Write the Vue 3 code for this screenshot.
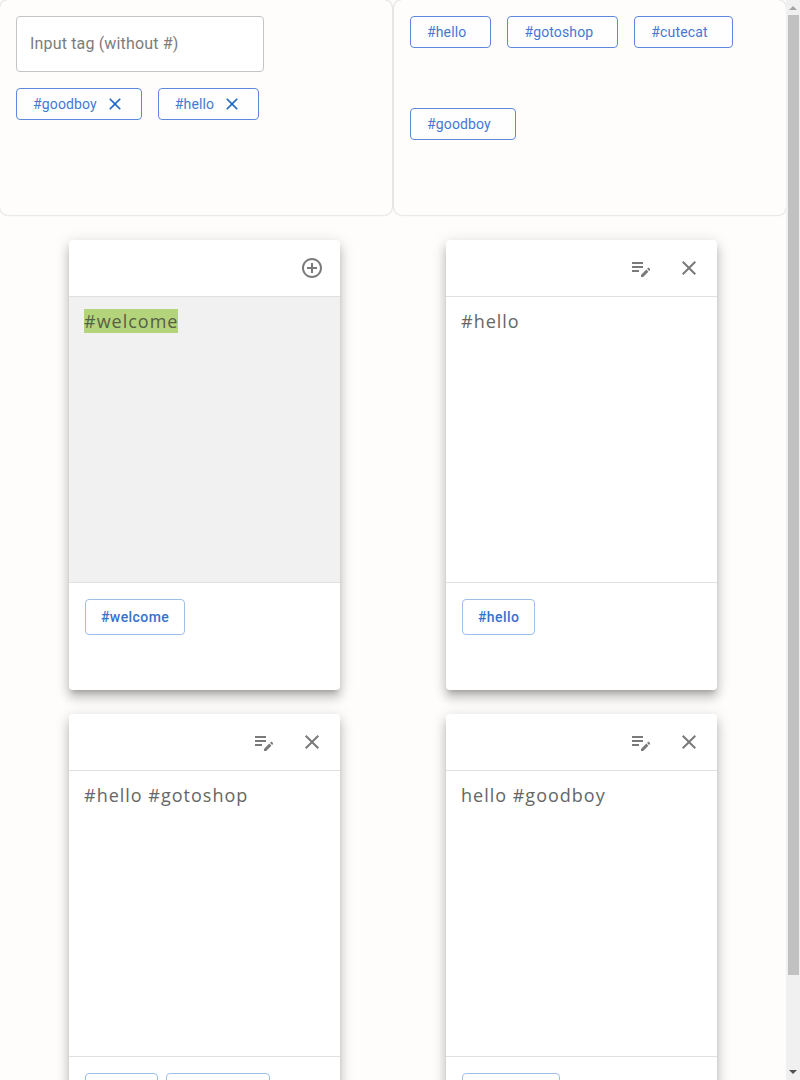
<script setup>
import { ref } from 'vue'

const draft = ref('')
const selected = ref(['goodboy', 'hello'])
const available = ['hello', 'gotoshop', 'cutecat', 'goodboy']

const notes = [
  { parts: [{ text: '#welcome', marked: true }], tags: ['welcome'], isNew: true },
  { parts: [{ text: '#hello' }], tags: ['hello'] },
  { parts: [{ text: '#hello #gotoshop' }], tags: ['hello', 'gotoshop'] },
  { parts: [{ text: 'hello #goodboy' }], tags: ['goodboy'] },
]

function addTag() {
  const tag = draft.value.trim()
  if (tag && !selected.value.includes(tag)) selected.value.push(tag)
  draft.value = ''
}

function removeTag(tag) {
  selected.value = selected.value.filter((t) => t !== tag)
}
</script>

<template>
  <div class="page">
    <main class="content">
      <div class="filters">
        <section class="panel">
          <input
            v-model="draft"
            class="tag-input"
            type="text"
            placeholder="Input tag (without #)"
            aria-label="Input tag (without #)"
            @keyup.enter="addTag"
          />
          <div class="chips">
            <span v-for="tag in selected" :key="tag" class="chip chip-closable">
              #{{ tag }}
              <button type="button" class="chip-close" :aria-label="`Remove ${tag}`" @click="removeTag(tag)">
                <svg viewBox="0 0 24 24" width="20" height="20"><path d="M19 6.41 17.59 5 12 10.59 6.41 5 5 6.41 10.59 12 5 17.59 6.41 19 12 13.41 17.59 19 19 17.59 13.41 12z" /></svg>
              </button>
            </span>
          </div>
        </section>
        <section class="panel available">
          <button v-for="tag in available" :key="tag" type="button" class="chip">#{{ tag }}</button>
        </section>
      </div>

      <div class="notes">
        <article v-for="(note, i) in notes" :key="i" class="note">
          <header class="note-head">
            <button v-if="note.isNew" type="button" class="icon-btn" aria-label="Add note">
              <svg viewBox="0 0 24 24" width="24" height="24"><path d="M13 7h-2v4H7v2h4v4h2v-4h4v-2h-4V7zm-1-5C6.48 2 2 6.48 2 12s4.48 10 10 10 10-4.48 10-10S17.52 2 12 2zm0 18c-4.41 0-8-3.59-8-8s3.59-8 8-8 8 3.59 8 8-3.59 8-8 8z" /></svg>
            </button>
            <template v-else>
              <button type="button" class="icon-btn" aria-label="Edit note">
                <svg viewBox="0 0 24 24" width="24" height="24"><path d="M3 10h11v2H3v-2zm0-2h11V6H3v2zm0 8h7v-2H3v2zm15.01-3.13.71-.71c.39-.39 1.02-.39 1.41 0l.71.71c.39.39.39 1.02 0 1.41l-.71.71-2.12-2.12zm-.71.71-5.3 5.3V21h2.12l5.3-5.3-2.12-2.12z" /></svg>
              </button>
              <button type="button" class="icon-btn" aria-label="Delete note">
                <svg viewBox="0 0 24 24" width="24" height="24"><path d="M19 6.41 17.59 5 12 10.59 6.41 5 5 6.41 10.59 12 5 17.59 6.41 19 12 13.41 17.59 19 19 17.59 13.41 12z" /></svg>
              </button>
            </template>
          </header>
          <div class="note-body" :class="{ 'note-body-new': note.isNew }">
            <component :is="part.marked ? 'mark' : 'span'" v-for="part in note.parts" :key="part.text">{{ part.text }}</component>
          </div>
          <footer class="note-foot">
            <button v-for="tag in note.tags" :key="tag" type="button" class="tag-btn">#{{ tag }}</button>
          </footer>
        </article>
      </div>
    </main>

    <div class="scrollbar" aria-hidden="true">
      <svg class="arrow arrow-up" viewBox="0 0 8 4" width="8" height="4"><path d="M0 4 4 0l4 4z" /></svg>
      <div class="track"><div class="thumb"></div></div>
      <svg class="arrow" viewBox="0 0 8 4" width="8" height="4"><path d="M0 0h8L4 4z" /></svg>
    </div>
  </div>
</template>

<style>
body {
  margin: 0;
  background: #fefdfc;
}
</style>

<style scoped>
.page,
.page * {
  box-sizing: border-box;
}
.page {
  display: flex;
  height: 100vh;
  overflow: hidden;
  font-family: Roboto, "Liberation Sans", sans-serif;
}
.content {
  flex: 1;
  min-width: 0;
  overflow: hidden;
}
.filters {
  display: grid;
  grid-template-columns: 1fr 1fr;
  gap: 2px;
}
.panel {
  min-height: 215px;
  padding: 16px;
  border-radius: 8px;
  background: #fefdfc;
  box-shadow: 0 0 2px rgba(0, 0, 0, 0.3);
}
.available {
  display: flex;
  flex-wrap: wrap;
  align-items: flex-start;
  column-gap: 16px;
}
.tag-input {
  display: block;
  width: 248px;
  max-width: 100%;
  height: 56px;
  padding: 0 13px 2px;
  border: 1px solid #c4c4c4;
  border-radius: 4px;
  background: #fff;
  color: #333;
  font: 16px Roboto, "Liberation Sans", sans-serif;
  letter-spacing: 0.01em;
}
.tag-input::placeholder {
  color: #7c7c7c;
  opacity: 1;
}
.chips {
  display: flex;
  flex-wrap: wrap;
  gap: 16px;
  margin-top: 16px;
}
.chip {
  display: inline-flex;
  align-items: center;
  height: 32px;
  padding: 0 24px 0 16px;
  border: 1px solid #5f88dc;
  border-radius: 4px;
  background: #fefefe;
  color: #4379d3;
  font: 14px Roboto, "Liberation Sans", sans-serif;
  letter-spacing: 0.01em;
}
.chip-closable {
  gap: 8px;
  padding-right: 16px;
}
.chip-close,
.icon-btn {
  display: flex;
  padding: 0;
  border: 0;
  background: none;
}
.chip-close svg {
  fill: #1f6ac4;
}
.notes {
  display: grid;
  grid-template-columns: 1fr 1fr;
  row-gap: 24px;
  justify-items: center;
  padding: 25px 16px 24px;
}
.note {
  display: flex;
  flex-direction: column;
  width: 100%;
  max-width: 271px;
  min-height: 450px;
  border-radius: 4px;
  background: #fff;
  box-shadow: 0 5px 5px -3px rgba(0, 0, 0, 0.2), 0 8px 10px 1px rgba(0, 0, 0, 0.14), 0 3px 14px 2px rgba(0, 0, 0, 0.12);
}
.note-head {
  display: flex;
  align-items: center;
  justify-content: flex-end;
  gap: 24px;
  height: 56px;
  padding: 0 16px;
}
.icon-btn svg {
  fill: #7a7a7a;
}
.note-body {
  flex: 1;
  padding: 12px 15px;
  border-top: 1px solid #e0e0e0;
  border-bottom: 1px solid #e0e0e0;
  color: #666;
  font: 18px/25px "Open Sans", sans-serif;
  letter-spacing: 1px;
}
.note-body-new {
  background: #f1f1f1;
}
.note-body mark {
  background: #b4d47c;
  color: #556045;
}
.note-foot {
  display: flex;
  flex-wrap: wrap;
  align-content: flex-start;
  gap: 8px;
  height: 107px;
  padding: 16px;
}
.tag-btn {
  height: 36px;
  padding: 0 15px;
  border: 1px solid #9dc0e8;
  border-radius: 4px;
  background: #fff;
  color: #3672cc;
  font: 500 14px Roboto, "Liberation Sans", sans-serif;
  letter-spacing: 0.03em;
}
.scrollbar {
  display: flex;
  flex-direction: column;
  align-items: center;
  width: 14px;
  padding: 6px 1px;
  background: #f0f0f0;
}
.track {
  flex: 1;
  width: 100%;
  padding: 5px 0 0 1px;
}
.thumb {
  height: 91%;
  background: #c1c1c1;
}
.arrow {
  fill: #505050;
}
.arrow-up {
  fill: #a3a3a3;
}
</style>
